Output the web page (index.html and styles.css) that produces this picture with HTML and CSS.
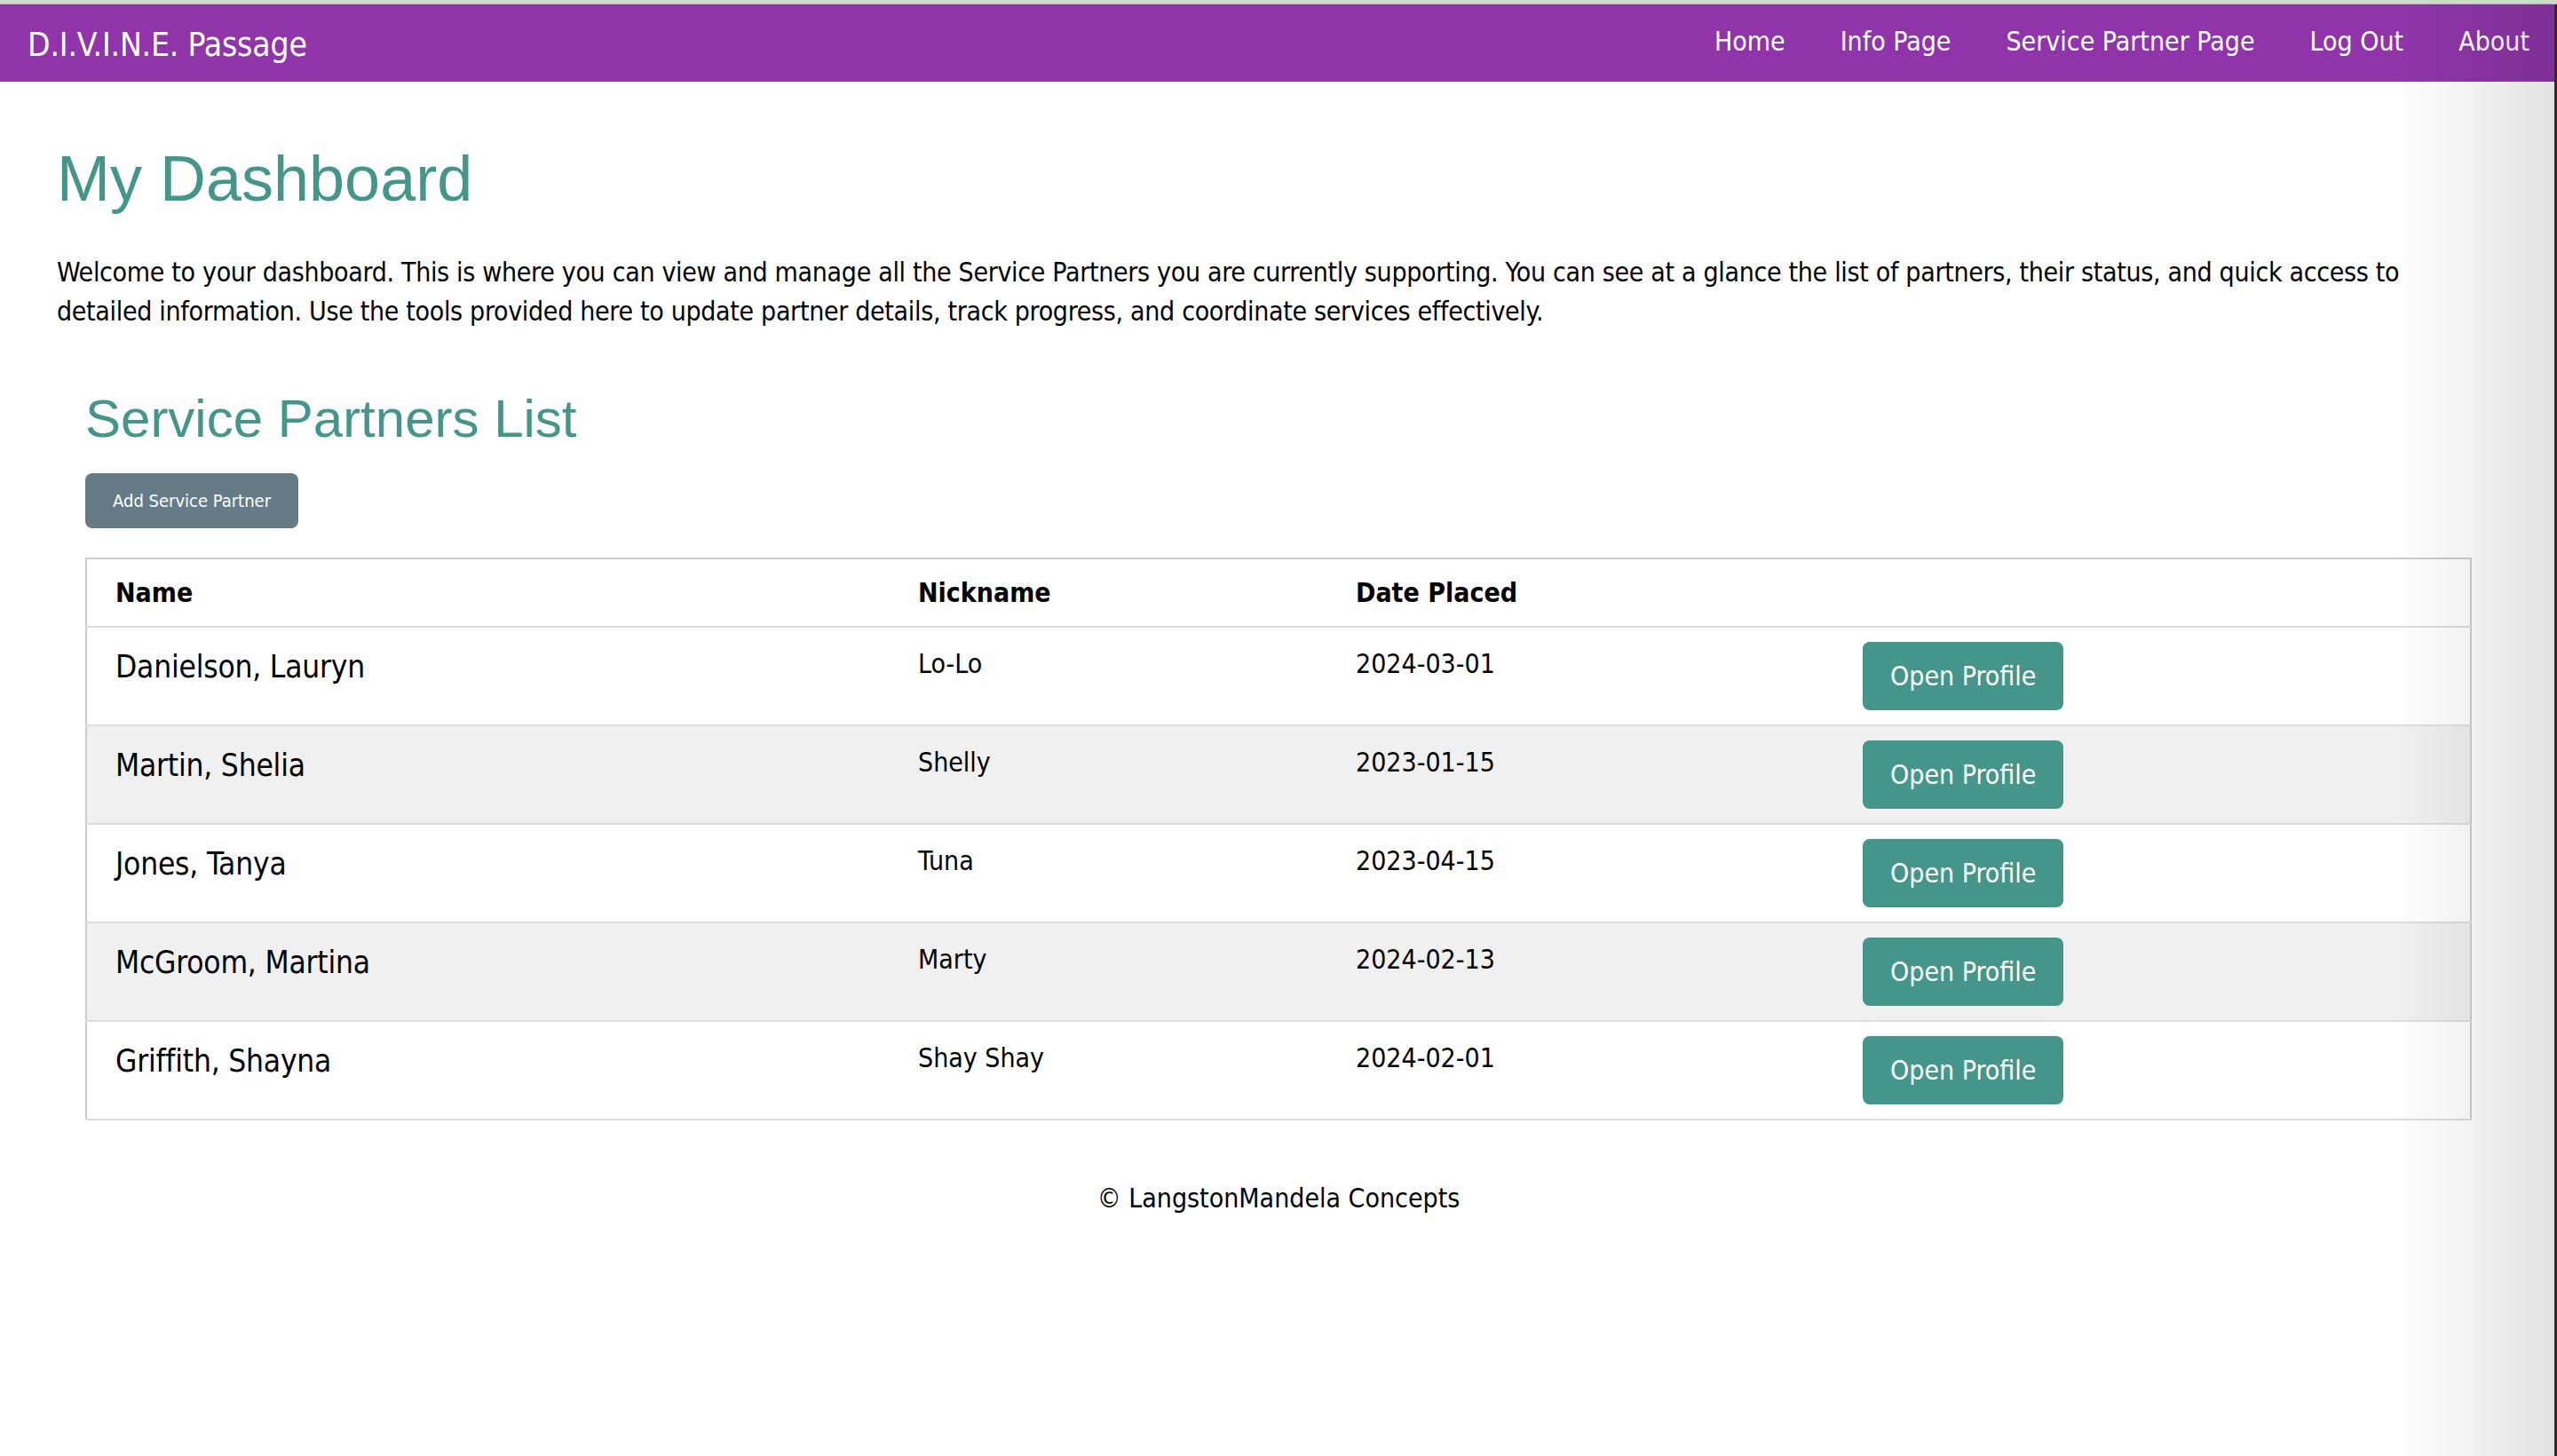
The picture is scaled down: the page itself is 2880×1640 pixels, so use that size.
FILE: index.html
```html
<!DOCTYPE html>
<html lang="en">
<head>
<meta charset="utf-8">
<title>D.I.V.I.N.E. Passage - My Dashboard</title>
<link rel="stylesheet" href="styles.css">
</head>
<body>
<div class="top-strip"></div>
<nav class="navbar">
  <a class="brand" href="#">D.I.V.I.N.E. Passage</a>
  <ul class="nav-links">
    <li><a href="#">Home</a></li>
    <li><a href="#">Info Page</a></li>
    <li><a href="#">Service Partner Page</a></li>
    <li><a href="#">Log Out</a></li>
    <li><a href="#">About</a></li>
  </ul>
</nav>
<main class="content">
  <h1 class="page-title">My Dashboard</h1>
  <p class="intro">Welcome to your dashboard. This is where you can view and manage all the Service Partners you are currently supporting. You can see at a glance the list of partners, their status, and quick access to detailed information. Use the tools provided here to update partner details, track progress, and coordinate services effectively.</p>
  <section class="partners">
    <h2 class="section-title">Service Partners List</h2>
    <button class="btn-add" type="button">Add Service Partner</button>
    <table class="partner-table">
      <colgroup>
        <col class="c-name"><col class="c-nick"><col class="c-date"><col class="c-action">
      </colgroup>
      <thead>
        <tr><th>Name</th><th>Nickname</th><th>Date Placed</th><th></th></tr>
      </thead>
      <tbody>
        <tr><td class="name">Danielson, Lauryn</td><td>Lo-Lo</td><td>2024-03-01</td><td class="action"><button class="btn-open" type="button">Open Profile</button></td></tr>
        <tr><td class="name">Martin, Shelia</td><td>Shelly</td><td>2023-01-15</td><td class="action"><button class="btn-open" type="button">Open Profile</button></td></tr>
        <tr><td class="name">Jones, Tanya</td><td>Tuna</td><td>2023-04-15</td><td class="action"><button class="btn-open" type="button">Open Profile</button></td></tr>
        <tr><td class="name">McGroom, Martina</td><td>Marty</td><td>2024-02-13</td><td class="action"><button class="btn-open" type="button">Open Profile</button></td></tr>
        <tr><td class="name">Griffith, Shayna</td><td>Shay Shay</td><td>2024-02-01</td><td class="action"><button class="btn-open" type="button">Open Profile</button></td></tr>
      </tbody>
    </table>
  </section>
</main>
<footer class="footer">© LangstonMandela Concepts</footer>
<div class="edge-shade"></div>
</body>
</html>
```

FILE: styles.css
```css
html, body {
  margin: 0;
  padding: 0;
  background: #ffffff;
}

body {
  font-family: "DejaVu Sans Condensed", "DejaVu Sans", sans-serif;
  font-size: 30px;
  color: #000000;
  min-height: 1640px;
  position: relative;
}

.top-strip {
  height: 4px;
  background: #c9ddc9;
  border-bottom: 1px solid #a8bfa8;
}

.navbar {
  height: 87px;
  background: #8f35a9;
  display: flex;
  align-items: center;
  justify-content: space-between;
  padding: 0 31px;
}

.brand {
  color: #ffffff;
  text-decoration: none;
  font-size: 37px;
  margin-top: 4px;
  letter-spacing: -0.2px;
}

.nav-links {
  list-style: none;
  margin: 0 0 4px;
  padding: 0;
  display: flex;
  gap: 62px;
}

.nav-links a {
  color: #ffffff;
  text-decoration: none;
  font-size: 30px;
}

.content {
  padding: 0 64px;
}

.page-title {
  font-family: "Liberation Sans", Arial, sans-serif;
  font-weight: normal;
  font-size: 72px;
  line-height: 83px;
  color: #439689;
  margin: 68px 0 0;
}

.intro {
  margin: 42px 0 0;
  line-height: 44px;
  letter-spacing: -0.32px;
}

.partners {
  padding: 0 32px;
}

.section-title {
  font-family: "Liberation Sans", Arial, sans-serif;
  font-weight: normal;
  font-size: 60px;
  line-height: 69px;
  color: #439689;
  margin: 64px 0 0;
}

.btn-add {
  display: block;
  margin-top: 27px;
  height: 62px;
  padding: 0 31px;
  border: none;
  border-radius: 8px;
  background: #657c88;
  color: #ffffff;
  font-family: "DejaVu Sans Condensed", "DejaVu Sans", sans-serif;
  font-size: 20px;
}

.partner-table {
  margin-top: 33px;
  width: 100%;
  border-collapse: collapse;
  table-layout: fixed;
  border: 2px solid #cccccc;
}

.c-name { width: 905px; }
.c-nick { width: 493px; }
.c-date { width: 571px; }
.c-action { width: 717px; }

.partner-table th {
  text-align: left;
  font-weight: bold;
  font-size: 30px;
  line-height: 35px;
  padding: 20px 32px;
  border-bottom: 2px solid #dddddd;
}

.partner-table td {
  vertical-align: top;
  font-size: 30px;
  line-height: 36px;
  padding: 23px 32px 17px;
  border-bottom: 2px solid #dddddd;
}

.partner-table td.name {
  font-size: 35px;
  line-height: 42px;
  letter-spacing: -0.2px;
}

.partner-table td.action {
  vertical-align: middle;
  padding: 16px 32px;
}

.partner-table tbody tr:nth-child(even) {
  background: #f0f0f0;
}

.btn-open {
  height: 77px;
  padding: 0 31px;
  border: none;
  border-radius: 8px;
  background: #439689;
  color: #ffffff;
  font-family: "DejaVu Sans Condensed", "DejaVu Sans", sans-serif;
  font-size: 30px;
  display: block;
}

.footer {
  text-align: center;
  margin-top: 70px;
  line-height: 36px;
}

.edge-shade {
  position: absolute;
  top: 5px;
  right: 0;
  bottom: 0;
  width: 180px;
  background: linear-gradient(to right, rgba(0, 0, 0, 0) 0%, rgba(0, 0, 0, 0.11) 98%);
  border-right: 3px solid #2b2b2b;
  pointer-events: none;
}
```
